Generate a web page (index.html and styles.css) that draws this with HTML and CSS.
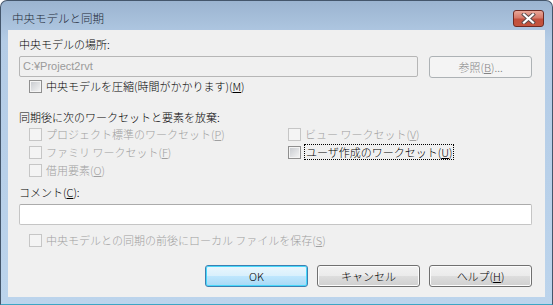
FILE: index.html
```html
<!DOCTYPE html>
<html lang="ja">
  <head>
    <meta charset="UTF-8" />
    <title>中央モデルと同期</title>
    <link rel="stylesheet" href="styles.css">
  </head>
  <body>
    <div class="window">
      <div class="titlebar">
        <span class="title">中央モデルと同期</span>
        <div class="close">
          <svg width="17" height="11" viewBox="0 0 17 11">
            <path d="M4 1.5 L13 9.5 M13 1.5 L4 9.5" stroke="#5a4a4a" stroke-width="4" stroke-linecap="square" />
            <path d="M4 1.5 L13 9.5 M13 1.5 L4 9.5" stroke="#ffffff" stroke-width="2.2" stroke-linecap="square" />
          </svg>
        </div>
      </div>

      <div class="client">
        <div class="label">中央モデルの場所:</div>
        <div class="path-row">
          <div class="field field-disabled">C:¥Project2rvt</div>
          <button class="btn btn-disabled">参照(<u>B</u>)...</button>
        </div>
        <label class="check-row">
          <span class="box"></span>
          <span>中央モデルを圧縮(時間がかかります)(<u>M</u>)</span>
        </label>

        <div class="label label-gap">同期後に次のワークセットと要素を放棄:</div>
        <div class="options">
          <label class="check-row disabled"><span class="box"></span><span>プロジェクト標準のワークセット(<u>P</u>)</span></label>
          <label class="check-row disabled"><span class="box"></span><span>ビュー ワークセット(<u>V</u>)</span></label>
          <label class="check-row disabled"><span class="box"></span><span>ファミリ ワークセット(<u>F</u>)</span></label>
          <label class="check-row"><span class="box"></span><span class="focus">ユーザ作成のワークセット(<u>U</u>)</span></label>
          <label class="check-row disabled"><span class="box"></span><span>借用要素(<u>O</u>)</span></label>
        </div>

        <div class="label label-comment">コメント(<u>C</u>):</div>
        <div class="field field-comment"></div>
        <label class="check-row disabled save-row">
          <span class="box"></span>
          <span>中央モデルとの同期の前後にローカル ファイルを保存(<u>S</u>)</span>
        </label>

        <div class="buttons">
          <button class="btn btn-default">OK</button>
          <button class="btn">キャンセル</button>
          <button class="btn">ヘルプ(<u>H</u>)</button>
        </div>
      </div>
    </div>
  </body>
</html>
```

FILE: styles.css
```css
/* Dialog window */
body {
  margin: 0;
  background: #ffffff;
  font-family: "Noto Sans CJK JP", "Noto Sans", sans-serif;
  font-size: 11px;
  font-weight: 300;
  color: #000000;
}

.window {
  width: 553px;
  height: 305px;
  box-sizing: border-box;
  border: 1px solid #44566b;
  border-bottom-color: #3ea5c4;
  border-radius: 7px 7px 0 0;
  background: linear-gradient(#9bb4d0, #b4cce6 40px, #bcd4ec);
  display: flex;
  flex-direction: column;
}

.titlebar {
  height: 29px;
  box-sizing: border-box;
  padding: 9px 8px 0 11px;
  display: flex;
  justify-content: space-between;
  align-items: flex-start;
}

.title {
  line-height: 17px;
  font-size: 11.5px;
  color: #1e2a38;
}

.close {
  width: 31px;
  height: 17px;
  box-sizing: border-box;
  border: 1px solid #6e2a22;
  border-radius: 3px;
  background: linear-gradient(#e9a899, #d67a6a 45%, #c24f3c 55%, #c4553e);
  display: flex;
  align-items: center;
  justify-content: center;
}

.client {
  flex: 1;
  margin: 0 7px 7px;
  background: #f0f0f0;
  padding: 6px 13px 0 11px;
}

.label {
  line-height: 16px;
}

.label-gap {
  margin-top: 15px;
}

.label-comment {
  margin-top: 5px;
}

/* Text fields */
.path-row {
  display: flex;
  gap: 11px;
  margin-top: 4px;
  height: 22px;
}

.field {
  box-sizing: border-box;
  border: 1px solid #b6b6b6;
  border-radius: 2px;
  background: #ffffff;
  padding: 0 3px;
  line-height: 19px;
}

.field-disabled {
  width: 400px;
  height: 21px;
  background: #f0f0f0;
  color: #9a9a9a;
  font-family: "Liberation Sans", "Noto Sans CJK JP", sans-serif;
  font-weight: 400;
  font-size: 11px;
}

.field-comment {
  margin-top: 4px;
  height: 21px;
  border-color: #c5c5c5;
  border-top-color: #ababab;
}

/* Checkboxes */
.check-row {
  display: flex;
  align-items: center;
  gap: 4px;
  height: 16px;
  padding-left: 10px;
  white-space: nowrap;
}

.box {
  width: 13px;
  height: 13px;
  box-sizing: border-box;
  border: 1px solid #8f8f8f;
  background: linear-gradient(135deg, #c5c8cd, #f7f7f7);
  box-shadow: inset 0 0 0 1px #f4f4f4;
  flex-shrink: 0;
}

.disabled {
  color: #a0a0a0;
}

.disabled .box {
  border-color: #c6c6c6;
  background: #f4f4f4;
  box-shadow: none;
}

.options {
  display: grid;
  grid-template-columns: 259px 1fr;
  grid-auto-rows: 18px;
  align-items: center;
}

.focus {
  outline: 1px dotted #000000;
  outline-offset: 0;
  padding: 0 1px;
  line-height: 14px;
}

.save-row {
  margin-top: 7px;
}

/* Buttons */
.buttons {
  display: flex;
  justify-content: flex-end;
  gap: 9px;
  margin-top: 17px;
}

.btn {
  width: 103px;
  height: 22px;
  box-sizing: border-box;
  border: 1px solid #707070;
  border-radius: 3px;
  background: linear-gradient(#f2f2f2, #ebebeb 48%, #dddddd 52%, #cfcfcf);
  box-shadow: inset 0 0 0 1px #fcfcfc;
  font-family: "Noto Sans CJK JP", "Noto Sans", sans-serif;
  font-size: 11px;
  font-weight: 300;
  color: #000000;
  padding: 0;
  line-height: 18px;
}

.btn-default {
  border-color: #3c7fb1;
  background: linear-gradient(#eaf6fd, #d9f0fc 48%, #bee6fd 52%, #a7d9f5);
  box-shadow: inset 0 0 0 1px #48d8fb;
}

.btn-disabled {
  border-color: #adb2b5;
  background: #f4f4f4;
  color: #838383;
  box-shadow: none;
}
```
